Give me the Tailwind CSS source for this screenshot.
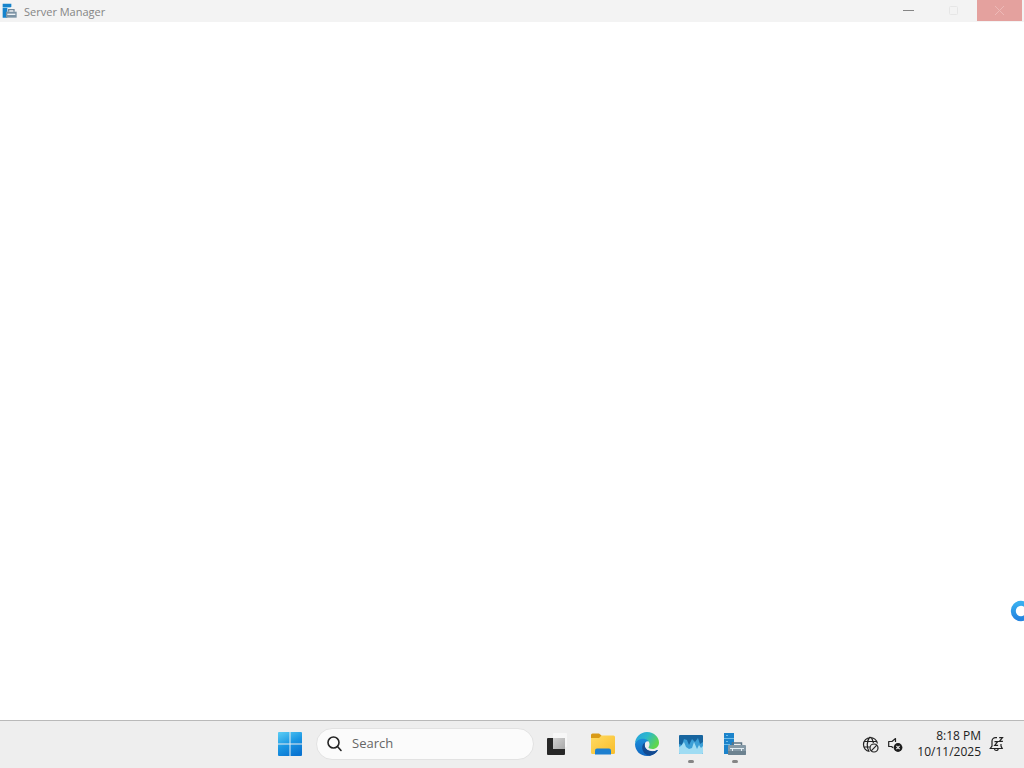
<!DOCTYPE html>
<html lang="en">
  <head>
    <meta charset="UTF-8" />
    <meta name="viewport" content="width=device-width, initial-scale=1.0" />
    <title>Server Manager</title>
    <script src="https://cdn.jsdelivr.net/npm/@tailwindcss/browser@4"></script>
  </head>

  <body class="relative h-screen flex flex-col overflow-hidden bg-white font-['Open_Sans','Noto_Sans',sans-serif] text-xs">
    <!-- Title bar -->
    <header class="h-[22px] shrink-0 flex items-center bg-[#f3f3f3] px-[2px]">
      <svg class="w-4 h-4 shrink-0" viewBox="0 0 24 24">
        <path fill="#1583cc" d="M1 1h13v5H1zM1 7h7v15H1z" />
        <path fill="#6ebde9" d="M1 6h12v1H1z" />
        <path fill="none" stroke="#71889a" stroke-width="2" d="M10 13v-3h8v3" />
        <path fill="#7c93a4" d="M6 13h16v9H6z" />
        <path fill="#eef3f6" d="M8 16h12v2H8z" />
      </svg>
      <h1 class="ml-[6px] pt-[2px] text-[11px] text-[#858585]">Server Manager</h1>
      <div class="ml-auto flex self-stretch">
        <button type="button" aria-label="Minimize" class="w-[46px] flex items-center justify-center">
          <svg class="w-[11px] h-[11px]" viewBox="0 0 11 11"><path stroke="#858585" d="M0 4.5h11" /></svg>
        </button>
        <button type="button" aria-label="Maximize" class="w-[46px] flex items-center justify-center" disabled>
          <svg class="w-[11px] h-[11px]" viewBox="0 0 11 11"><rect x="0.5" y="0.5" width="8" height="8" rx="1" fill="none" stroke="#e6e6e6" /></svg>
        </button>
        <button type="button" aria-label="Close" class="w-[45px] mb-px flex items-center justify-center bg-[#e4a19e]">
          <svg class="w-[11px] h-[11px]" viewBox="0 0 11 11"><path stroke="#edb9b7" d="M1 1l9 9M10 1l-9 9" /></svg>
        </button>
      </div>
    </header>

    <!-- Window content, still loading -->
    <main class="flex-1 bg-white"></main>

    <!-- Busy cursor -->
    <svg class="absolute right-[-8px] bottom-[146px] w-[22px] h-[22px]" viewBox="0 0 22 22">
      <defs>
        <linearGradient id="ring" x1="0" y1="0" x2="0" y2="1">
          <stop offset="0" stop-color="#38aeef" />
          <stop offset="1" stop-color="#2585e0" />
        </linearGradient>
      </defs>
      <circle cx="11" cy="11" r="7.7" fill="none" stroke="url(#ring)" stroke-width="5" />
    </svg>

    <!-- Taskbar -->
    <footer class="h-12 shrink-0 grid grid-cols-[1fr_auto_1fr] bg-[#eeeeee] border-t border-[#b9b9b9] pb-px">
      <div></div>
      <nav class="flex items-center">
        <button type="button" aria-label="Start" class="w-[46px] h-full flex items-center justify-center">
          <svg class="w-6 h-6" viewBox="0 0 24 24">
            <defs>
              <linearGradient id="win" x1="4" y1="0" x2="16" y2="24" gradientUnits="userSpaceOnUse">
                <stop offset="0" stop-color="#55c8f3" />
                <stop offset=".5" stop-color="#1b97e3" />
                <stop offset="1" stop-color="#0a74d1" />
              </linearGradient>
            </defs>
            <path fill="url(#win)" d="M1 0h10.5v11.5H0V1a1 1 0 0 1 1-1zM12.5 0H23a1 1 0 0 1 1 1v10.5H12.5zM0 12.5h11.5V24H1a1 1 0 0 1-1-1zM12.5 12.5H24V23a1 1 0 0 1-1 1H12.5z" />
          </svg>
        </button>
        <label class="ml-[3px] w-[218px] h-8 flex items-center rounded-full bg-[#fbfbfb] border border-[#e2e2e2] pl-[10px] pr-3">
          <svg class="w-4 h-4 shrink-0" viewBox="0 0 16 16" fill="none" stroke="#252525" stroke-width="1.6" stroke-linecap="round">
            <circle cx="6.5" cy="6.5" r="5.5" />
            <path d="M10.500 10.500L14 14.500" />
          </svg>
          <input type="text" aria-label="Search" placeholder="Search" class="ml-[9px] w-full min-w-0 bg-transparent outline-none text-[13px] placeholder-[#666666]" />
        </label>
        <button type="button" aria-label="Task View" class="w-[47px] h-full flex items-center justify-center">
          <svg class="w-6 h-6" viewBox="0 0 24 24">
            <defs>
              <linearGradient id="pane" x1="0" y1="0" x2="1" y2="1">
                <stop offset="0" stop-color="#d2d2d2" />
                <stop offset="1" stop-color="#a8a8a8" />
              </linearGradient>
            </defs>
            <rect x="7" y="1" width="14" height="14" rx="1" fill="#f7f7f7" />
            <rect x="1" y="6" width="18" height="17" rx="1" fill="#272727" />
            <path fill="url(#pane)" d="M7 6h12v11H7z" />
          </svg>
        </button>
        <button type="button" aria-label="File Explorer" class="w-11 h-full flex items-center justify-center">
          <svg class="w-[26px] h-6" viewBox="0 0 26 24">
            <defs>
              <linearGradient id="folder" x1="0" y1="0" x2="1" y2="1">
                <stop offset="0" stop-color="#ffdb63" />
                <stop offset="1" stop-color="#f8bd2a" />
              </linearGradient>
            </defs>
            <path fill="#d99a16" d="M1 3a1.5 1.5 0 0 1 1.5-1.5H9l2.5 2V8H1z" />
            <path fill="url(#folder)" d="M1 6h8l2.5-2.5h12A1.5 1.5 0 0 1 25 5v15.5a1.5 1.5 0 0 1-1.5 1.5h-21A1.5 1.5 0 0 1 1 20.5z" />
            <path fill="#1d7fcf" d="M5 22.500v-4a2 2 0 0 1 2-2h12a2 2 0 0 1 2 2v4z" />
          </svg>
        </button>
        <button type="button" aria-label="Microsoft Edge" class="w-11 h-full flex items-center justify-center">
          <svg class="w-6 h-6" viewBox="0 0 24 24">
            <defs>
              <linearGradient id="edgeTop" x1="0" y1="0" x2="1" y2=".5">
                <stop offset="0" stop-color="#279fe0" />
                <stop offset=".5" stop-color="#2cb8cc" />
                <stop offset="1" stop-color="#5fd64c" />
              </linearGradient>
              <linearGradient id="edgeSide" x1="0" y1="0" x2="0" y2="1">
                <stop offset="0" stop-color="#1b8fdc" />
                <stop offset="1" stop-color="#1166c0" />
              </linearGradient>
            </defs>
            <path fill="url(#edgeSide)" d="M0 12C1 7.5 5 5.5 9 5.8c3 .2 5 1.7 5.5 3.7C11 8.5 9.5 11 9.7 13.5c.3 4 4.3 6.5 8.3 6 1.8-.2 3.2-.9 4.2-1.5.4-.2.7.1.5.5C20.5 22 16.5 24 12 24 5.5 24 0 19 0 12z" />
            <path fill="#134a91" d="M9.6 10.5C7 12.5 6.5 16 8 19c1.5 3 4.5 5 7.5 4.6 3-.7 5.7-2.500 7.200-5.100.2-.4-.1-.7-.5-.5-5 2.800-12 .5-12.500-4.500-.1-1.200.1-2.200-.1-3z" />
            <path fill="url(#edgeTop)" d="M0 12C0 5 5.5 0 12 0c7.5 0 12 5.5 12 10.5 0 4-3 6.5-6.5 6.500-2.500 0-4-.8-4-1.500 0-.6 1-1 1-3.200C14.500 9 11.500 6.800 8 6.800 4 6.800 1 9 0 12z" />
          </svg>
        </button>
        <button type="button" aria-label="Monitor" class="relative w-11 h-full flex items-center justify-center">
          <svg class="w-6 h-[19px]" viewBox="0 0 24 19">
            <path fill="#17659f" d="M1 0h22a1 1 0 0 1 1 1v17a1 1 0 0 1-1 1H1a1 1 0 0 1-1-1V1a1 1 0 0 1 1-1z" />
            <path fill="#3b9fd6" d="M0 9l3 1 2-6 3 1 2 5 3-6 3 3 3-4 2 6 3-2v11a1 1 0 0 1-1 1H1a1 1 0 0 1-1-1z" />
            <path fill="#9fdcf3" d="M0 12l2-1 3-4 2 5 3 2 3-1 2-6 3 7 2-4 2 3 2-2v7a1 1 0 0 1-1 1H1a1 1 0 0 1-1-1z" />
          </svg>
          <span class="absolute bottom-1 w-[6px] h-[3px] rounded-full bg-[#858585]"></span>
        </button>
        <button type="button" aria-label="Server Manager" class="relative w-11 h-full flex items-center justify-center">
          <svg class="w-6 h-6" viewBox="0 0 24 24">
            <path fill="#1b83cb" d="M1 1h10v21H1z" />
            <path fill="#6ebde9" d="M1 6h10v1H1zM1 12h6v1H1zM3 3h2v1H3zM3 9h2v1H3z" />
            <path fill="none" stroke="#5d7484" stroke-width="1.5" d="M9.500 13v-2h9v2" />
            <rect x="5" y="13" width="18" height="10" rx="1" fill="#8599a6" />
            <path fill="#6c8290" d="M5 19h18v3a1 1 0 0 1-1 1H6a1 1 0 0 1-1-1z" />
            <path fill="#e3edf3" d="M7 16h14v1h-2v2h-1v-2h-8v2H9v-2H7z" />
          </svg>
          <span class="absolute bottom-1 w-[6px] h-[3px] rounded-full bg-[#858585]"></span>
        </button>
      </nav>

      <!-- System tray -->
      <div class="flex items-center justify-end pr-5">
        <button type="button" aria-label="No internet access" class="mr-2">
          <svg class="block w-[17px] h-[17px]" viewBox="0 0 17 17" fill="none" stroke="#222222" stroke-width="1.2">
            <path d="M7.500 15.500A7 7 0 1 1 15.400 7.500M8 1C4.500 4.500 4.500 12 7 15.300M8.500 1c1.800 1.700 2.700 4 2.900 6M1.700 5.500h13M1.700 11h6" />
            <circle cx="12" cy="12" r="4" />
            <path d="M9.200 14.800l5.600-5.600" />
          </svg>
        </button>
        <button type="button" aria-label="Volume muted" class="mr-[14px]">
          <svg class="block w-4 h-4" viewBox="0 0 16 16">
            <path fill="none" stroke="#222222" stroke-width="1.2" stroke-linejoin="round" d="M8.500 6V2.500L5 5.500H1.700v5H4.500L6 11.800" />
            <circle cx="11" cy="11.500" r="4.400" fill="#1c1c1c" />
            <path stroke="#eeeeee" stroke-width="1.2" d="M9.400 9.900l3.200 3.200M12.600 9.900l-3.200 3.200" />
          </svg>
        </button>
        <button type="button" class="text-right text-xs leading-4 text-[#222222]">8:18 PM<br />10/11/2025</button>
        <button type="button" aria-label="Notifications" class="ml-2">
          <svg class="block w-[15px] h-4" viewBox="0 0 15 16" fill="none" stroke="#222222" stroke-width="1.2">
            <path d="M8 1.600H6.500a3.500 3.500 0 0 0-3.500 3.500V10L1.300 12.500h11.900L12 10V8M5.500 13c.3 2 3.300 2 3.800 0" />
            <path d="M5.500 5.600h3.200l-3 3.800h3.400M10.200 1.600h3.300l-3.100 3.800h3.500" />
          </svg>
        </button>
      </div>
    </footer>
  </body>
</html>
